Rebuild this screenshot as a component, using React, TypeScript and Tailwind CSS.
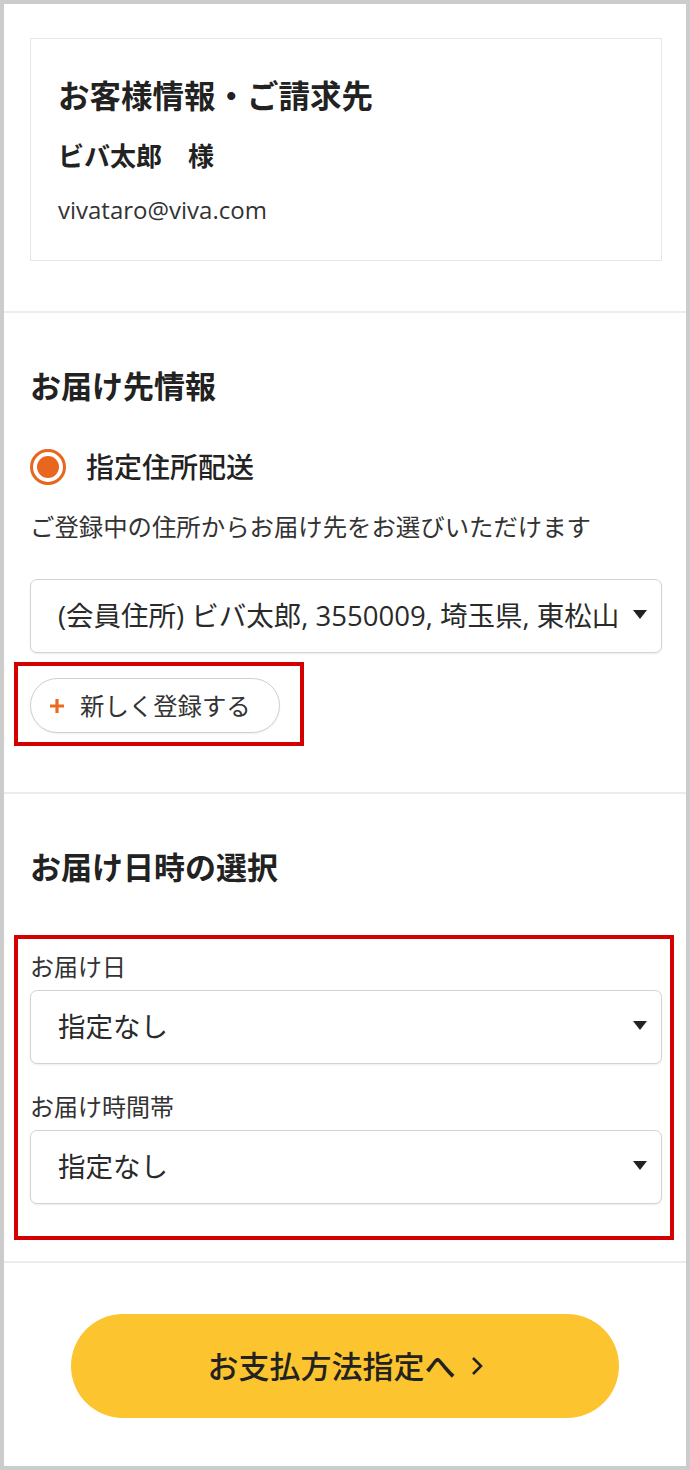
import React from "react";

const font = { fontFamily: '"Open Sans", "Noto Sans CJK JP", "Noto Sans", sans-serif' };

function Caret() {
  return (
    <svg width="14" height="9" viewBox="0 0 14 9" className="shrink-0">
      <path d="M0 0 L14 0 L7 9 Z" fill="#222" />
    </svg>
  );
}

function SelectBox({ text }: { text: string }) {
  return (
    <div className="flex h-[74px] items-center rounded-[7px] border border-[#d3d3d3] bg-white pl-[27px] pr-[14px] shadow-[0_1px_2px_rgba(0,0,0,0.08)]">
      <div className="min-w-0 flex-1 whitespace-nowrap text-[27.5px] leading-[34px] text-[#2a2a2a]">
        {text}
      </div>
      <div className="ml-[4px] mt-[-3px]">
        <Caret />
      </div>
    </div>
  );
}

export default function App() {
  return (
    <div
      className="h-[1470px] w-[690px] border-4 border-[#cccccc] bg-white text-[#222]"
      style={font}
    >
      {/* Section 1 */}
      <section className="pl-[26px] pr-[24px] pt-[34px] pb-[50px]">
        <div className="border border-[#e6e6e6] px-[27px] pt-[39px] pb-[35px]">
          <h2 className="text-[31.5px] font-bold leading-[36px] text-[#222]">
            お客様情報・ご請求先
          </h2>
          <p className="mt-[26px] text-[26px] font-bold leading-[32px] text-[#222]">
            ビバ太郎　様
          </p>
          <p className="mt-[23px] text-[24px] leading-[30px] text-[#333]">
            vivataro@viva.com
          </p>
        </div>
      </section>

      {/* Section 2 */}
      <section className="border-t-2 border-[#ececec] pl-[26px] pr-[24px] pt-[55px] pb-[46px]">
        <h2 className="text-[31px] font-bold leading-[36px] text-[#222]">お届け先情報</h2>
        <div className="mt-[45px] flex h-[36px] items-center gap-[20px]">
          <div className="flex h-[36px] w-[36px] items-center justify-center rounded-full border-[3px] border-[#e8661e]">
            <div className="h-[22px] w-[22px] rounded-full bg-[#e8661e]" />
          </div>
          <span className="text-[28px] font-medium leading-[34px] text-[#222]">指定住所配送</span>
        </div>
        <p className="mt-[27px] text-[24.4px] leading-[30px] text-[#333]">
          ご登録中の住所からお届け先をお選びいただけます
        </p>
        <div className="mt-[37px]">
          <SelectBox text="(会員住所) ビバ太郎, 3550009, 埼玉県, 東松山" />
        </div>
        <div className="mt-[9px] ml-[-16px] w-fit border-4 border-[#d40000] pl-[12px] pr-[20px] pt-[12px] pb-[9px]">
          <button className="flex h-[55px] w-[250px] items-center rounded-full border border-[#cfcfcf] bg-white pl-[19px] shadow-[0_1px_2px_rgba(0,0,0,0.06)]">
            <svg width="14" height="14" viewBox="0 0 14 14" className="shrink-0">
              <path d="M7 0 V14 M0 7 H14" stroke="#ea6a1e" strokeWidth="3.2" />
            </svg>
            <span className="ml-[16px] text-[24.4px] leading-[30px] text-[#333]">新しく登録する</span>
          </button>
        </div>
      </section>

      {/* Section 3 */}
      <section className="border-t-2 border-[#ececec] pl-[26px] pr-[24px] pt-[55px] pb-[21px]">
        <h2 className="text-[31px] font-bold leading-[36px] text-[#222]">お届け日時の選択</h2>
        <div className="mt-[50px] ml-[-16px] mr-[-12px] border-4 border-[#d40000] pl-[12px] pr-[8px] pt-[13px] pb-[32px]">
          <p className="text-[24px] leading-[30px] text-[#333]">お届け日</p>
          <div className="mt-[8px]">
            <SelectBox text="指定なし" />
          </div>
          <p className="mt-[28px] text-[24px] leading-[30px] text-[#333]">お届け時間帯</p>
          <div className="mt-[8px]">
            <SelectBox text="指定なし" />
          </div>
        </div>
      </section>

      {/* Section 4 */}
      <section className="border-t-2 border-[#ececec] pt-[51px]">
        <button className="mx-auto flex h-[104px] w-[548px] items-center justify-center rounded-full bg-[#fcc42f]">
          <span className="text-[31px] font-medium leading-[36px] text-[#222]">お支払方法指定へ</span>
          <svg width="12" height="20" viewBox="0 0 12 20" className="ml-[15px] shrink-0">
            <path d="M2 2 L10 10 L2 18" fill="none" stroke="#222" strokeWidth="2.6" />
          </svg>
        </button>
      </section>
    </div>
  );
}
